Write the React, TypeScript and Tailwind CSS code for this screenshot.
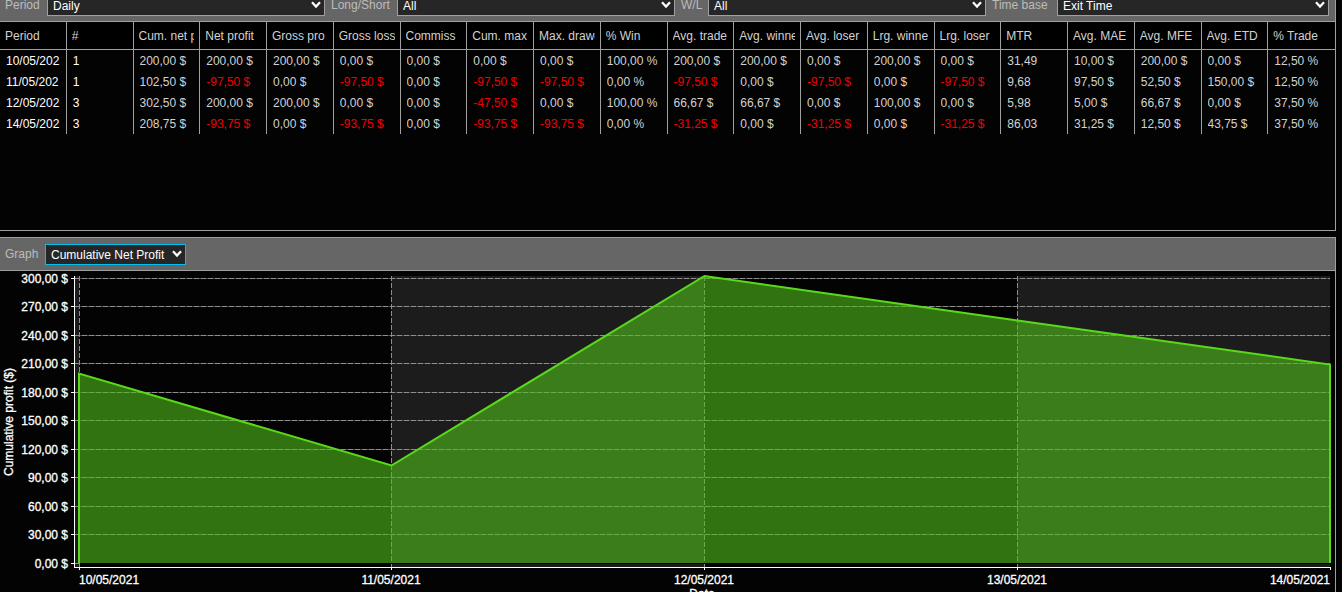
import { useId } from "react";

const money = (v: string) => `${v} $`;

const headers = [
  "Period", "#", "Cum. net p", "Net profit", "Gross pro", "Gross loss", "Commiss",
  "Cum. max", "Max. drawd", "% Win", "Avg. trade", "Avg. winne", "Avg. loser",
  "Lrg. winne", "Lrg. loser", "MTR", "Avg. MAE", "Avg. MFE", "Avg. ETD", "% Trade",
];

const z = money("0,00");
const rows: string[][] = [
  ["10/05/202", "1", money("200,00"), money("200,00"), money("200,00"), z, z, z, z, "100,00 %", money("200,00"), money("200,00"), z, money("200,00"), z, "31,49", money("10,00"), money("200,00"), z, "12,50 %"],
  ["11/05/202", "1", money("102,50"), money("-97,50"), z, money("-97,50"), z, money("-97,50"), money("-97,50"), "0,00 %", money("-97,50"), z, money("-97,50"), z, money("-97,50"), "9,68", money("97,50"), money("52,50"), money("150,00"), "12,50 %"],
  ["12/05/202", "3", money("302,50"), money("200,00"), money("200,00"), z, z, money("-47,50"), z, "100,00 %", money("66,67"), money("66,67"), z, money("100,00"), z, "5,98", money("5,00"), money("66,67"), z, "37,50 %"],
  ["14/05/202", "3", money("208,75"), money("-93,75"), z, money("-93,75"), z, money("-93,75"), money("-93,75"), "0,00 %", money("-31,25"), z, money("-31,25"), z, money("-31,25"), "86,03", money("31,25"), money("12,50"), money("43,75"), "37,50 %"],
];

function Picker({ label, value, labelClass, boxClass }: { label: string; value: string; labelClass: string; boxClass: string }) {
  const id = useId();
  return (
    <>
      <label htmlFor={id} className={`whitespace-nowrap text-[#bcbcbc] ${labelClass}`}>{label}</label>
      <div className={`relative h-[21px] ${boxClass}`}>
        <select id={id} defaultValue={value} className="block h-full w-full appearance-none rounded-none border border-inherit bg-[#262626] pl-[5px] pr-[18px] text-white outline-none">
          <option>{value}</option>
        </select>
        <svg viewBox="0 0 10 8" className="pointer-events-none absolute right-[4px] top-[6px] h-[8px] w-[10px]" fill="none" stroke="#fff" strokeWidth="2.2">
          <path d="M1 1.2 5 5.6 9 1.2" />
        </svg>
      </div>
    </>
  );
}

const xs = [79, 391, 704, 1017, 1330];
const dates = ["10/05/2021", "11/05/2021", "12/05/2021", "13/05/2021", "14/05/2021"];
const ticks = Array.from({ length: 11 }, (_, i) => ({
  y: Math.round(7 + i * 28.45),
  label: `${300 - i * 30},00 $`,
}));

function Chart() {
  return (
    <svg viewBox="0 0 1335 321" className="block w-full" fontSize="12" fill="#fff" role="img" aria-label="Cumulative Net Profit">
      <g fill="#1c1c1c">
        <rect x="75" y="5" width="4" height="291" />
        <rect x="391" y="5" width="313" height="291" />
        <rect x="1017" y="5" width="313" height="291" />
      </g>
      <g stroke="#464646" shapeRendering="crispEdges">
        {ticks.slice(0, 10).map((t) => <line key={t.y} x1="75" x2="1330" y1={t.y + 0.5} y2={t.y + 0.5} />)}
      </g>
      <g stroke="#8e8e8e" strokeDasharray="5 2" shapeRendering="crispEdges">
        {ticks.slice(0, 10).map((t) => <line key={t.y} x1="75" x2="1330" y1={t.y + 0.5} y2={t.y + 0.5} />)}
        <line x1="75" x2="79" y1="292.5" y2="292.5" />
        {xs.slice(0, 4).map((x) => <line key={x} x1={x + 0.5} x2={x + 0.5} y1="5" y2="296" />)}
      </g>
      <path d="M79 102.5 391.5 194.5 704.5 5 1017.5 49.5 1330 93.5V292H79Z" fill="#52be1b" fillOpacity="0.6" />
      <path d="M79 292V102.5L391.5 194.5 704.5 5 1017.5 49.5 1330 93.5V292" fill="none" stroke="#5ad91a" strokeWidth="2" />
      <path d="M80 292.5H1330" stroke="#000" shapeRendering="crispEdges" />
      <g stroke="#fff" shapeRendering="crispEdges">
        <path d="M74.5 5V297M74 296.5H1331" />
        {ticks.map((t) => <line key={t.y} x1="71" x2="74" y1={t.y + 0.5} y2={t.y + 0.5} />)}
        {xs.map((x) => <line key={x} x1={x + 0.5} x2={x + 0.5} y1="296" y2="299" />)}
      </g>
      <g stroke="#fff" strokeWidth="0.3">
        {ticks.map((t) => <text key={t.label} x="68" y={t.y + 5} textAnchor="end">{t.label}</text>)}
        {dates.map((d, i) => (
          <text key={d} x={xs[i]} y="313" textAnchor={i === 0 ? "start" : i === 4 ? "end" : "middle"}>{d}</text>
        ))}
        <text x="702" y="327" textAnchor="middle">Date</text>
        <text transform="translate(13 151) rotate(-90)" textAnchor="middle">Cumulative profit ($)</text>
      </g>
    </svg>
  );
}

export default function App() {
  return (
    <main className="h-screen overflow-hidden bg-[#030303] pr-[6px] font-['Liberation_Sans',Arial,sans-serif] text-[12px] leading-[21px]">
      <section className="min-h-[231px] border-r border-b border-[#a0a0a0]">
        <div className="grid h-[22px] grid-cols-[42px_278fr_72px_278fr_33px_278fr_71px_272fr] content-end overflow-hidden border-b border-[#a0a0a0] bg-[#666] pr-[6px] pb-[5px] pl-[5px]">
          <Picker label="Period" value="Daily" labelClass="" boxClass="border-[#a0a0a0]" />
          <Picker label="Long/Short" value="All" labelClass="pl-[6px]" boxClass="border-[#a0a0a0]" />
          <Picker label="W/L" value="All" labelClass="pl-[6px]" boxClass="border-[#a0a0a0]" />
          <Picker label="Time base" value="Exit Time" labelClass="pl-[6px]" boxClass="border-[#a0a0a0]" />
        </div>
        <table className="w-full table-fixed border-separate border-spacing-0 text-left leading-[19px] text-[#d2d2d2]">
          <thead>
            <tr className="h-[28px] bg-black">
              {headers.map((h) => (
                <th key={h} className="border-r border-b border-[#a0a0a0] px-[5px] pt-[2px] pb-0 font-normal last:border-r-0">
                  <div className="overflow-hidden whitespace-nowrap">{h}</div>
                </th>
              ))}
            </tr>
          </thead>
          <tbody>
            {rows.map((r) => (
              <tr key={r[0]} className="h-[21px]">
                {r.map((c, i) => (
                  <td key={i} className={`border-r border-[#a0a0a0] pt-[2px] pr-[5px] pb-0 pl-[6px] last:border-r-0 ${c.startsWith("-") ? "text-[#f00000]" : i < 2 ? "text-white" : ""}`}>
                    <div className="overflow-hidden whitespace-nowrap">{c}</div>
                  </td>
                ))}
              </tr>
            ))}
          </tbody>
        </table>
      </section>
      <section className="mt-[6px] border-t border-r border-[#a0a0a0]">
        <div className="flex h-[33px] items-center border-b border-[#a0a0a0] bg-[#666] pl-[5px]">
          <Picker label="Graph" value="Cumulative Net Profit" labelClass="w-[40px]" boxClass="w-[141px] border-[#00bfef]" />
        </div>
        <Chart />
      </section>
    </main>
  );
}
